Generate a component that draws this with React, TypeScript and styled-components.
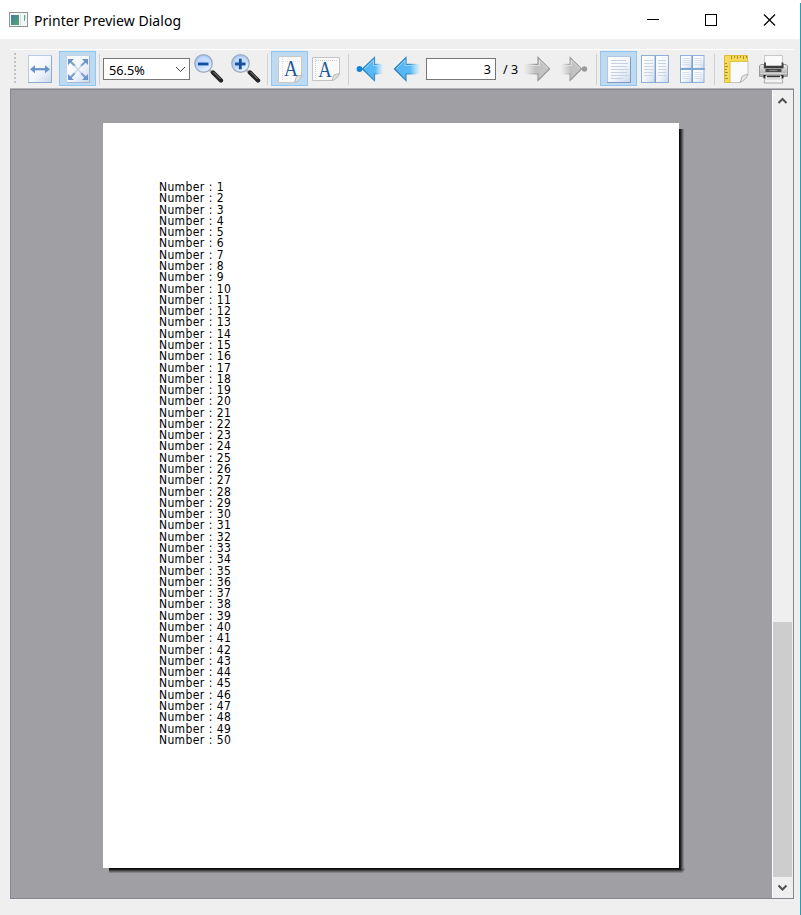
import React from "react";
import styled, { createGlobalStyle } from "styled-components";

const GlobalStyle = createGlobalStyle`
  html, body { margin: 0; padding: 0; background: #efefef; overflow: hidden; }
  * { box-sizing: border-box; }
`;

const Window = styled.div`
  width: 801px;
  height: 915px;
  display: flex;
  flex-direction: column;
  background: #efefef;
  font-family: "Noto Sans", "Open Sans", sans-serif;
  color: #000;
  position: relative;
`;

const WindowEdge = styled.div`
  position: absolute;
  right: 0;
  top: 3px;
  bottom: 0;
  width: 1px;
  background: #1ba1b8;
`;

const TitleBar = styled.header`
  height: 39px;
  flex: none;
  display: flex;
  align-items: center;
  background: #fff;
  padding: 0 0 0 9px;
`;

const Title = styled.h1`
  margin: 2px 0 0 6px;
  flex: 1;
  font-size: 14px;
  line-height: 20px;
  font-weight: 400;
  letter-spacing: 0.06px;
`;

const Caption = styled.div`
  display: flex;
  margin-right: 1px;
`;

const Body = styled.main`
  flex: 1;
  display: flex;
  flex-direction: column;
  padding: 10px 7px 16px 10px;
`;

const Toolbar = styled.div`
  height: 40px;
  flex: none;
  display: flex;
  align-items: flex-start;
  border-top: 1px solid #fff;
  border-bottom: 1px solid #b5b5b7;
  padding-top: 1px;
`;

const Grip = styled.div`
  width: 2px;
  height: 32px;
  margin: 2px 6px 0 4px;
  background: repeating-linear-gradient(to bottom, #c2c2c2 0 2px, transparent 2px 4px);
`;

const ToolButton = styled.button<{ $checked?: boolean }>`
  width: 37px;
  height: 35px;
  flex: none;
  padding: 0;
  border: 0;
  background: ${(p) => (p.$checked ? "#bedaf0" : "transparent")};
  box-shadow: ${(p) => (p.$checked ? "inset 0 0 0 1px #8fc6f2" : "none")};
`;

const IconSvg = styled.svg`
  display: block;
`;

const HiddenSvg = styled.svg`
  position: absolute;
`;

const Separator = styled.div`
  width: 7px;
  height: 31px;
  margin-top: 3px;
  flex: none;
  background: linear-gradient(#d0d0d0, #d0d0d0) 3px 0 / 1px 100% no-repeat;
`;

const ZoomCombo = styled.div`
  width: 87px;
  height: 22px;
  margin-top: 7px;
  padding: 1px 3px 0 5px;
  flex: none;
  display: flex;
  align-items: center;
  justify-content: space-between;
  border: 1px solid #777;
  background: #fff;
  font-size: 12.7px;
  line-height: 20px;
`;

const PageField = styled.div`
  width: 70px;
  height: 22px;
  margin-top: 7px;
  padding-right: 4px;
  flex: none;
  border: 1px solid #777;
  background: #fff;
  font-size: 12.5px;
  line-height: 22px;
  text-align: right;
`;

const PageCount = styled.span`
  width: 23px;
  flex: none;
  margin-top: 8px;
  padding-left: 7px;
  font-size: 12.5px;
  line-height: 22px;
  white-space: nowrap;
`;

const Preview = styled.section`
  flex: 1;
  display: flex;
  border: 1px solid #828790;
  background: #a09fa4;
`;

const Canvas = styled.div`
  flex: 1;
  padding: 33px 0 0 92px;
`;

const Sheet = styled.div`
  width: 582px;
  height: 750px;
  background:
    linear-gradient(#fff, #fff) 0 0 / 576px 745px no-repeat,
    linear-gradient(to right, #0c0c0c 0 1px, #202020 1px 2px, #424242 2px 3px, #666 3px 4px, #858587 4px 5px) 576px 6px / 5px 740px no-repeat,
    linear-gradient(to bottom, #080808 0 1px, #202020 1px 2px, #424242 2px 3px, #666 3px 4px, #858587 4px 5px) 6px 745px / 572px 5px no-repeat,
    radial-gradient(circle at 0 0, #181818 1px, #909093 5px, transparent 5.5px) 577px 745px / 5px 5px no-repeat;
`;

const Lines = styled.ol`
  list-style: none;
  margin: 0;
  padding: 59px 0 0 56px;
  font-family: "DejaVu Sans Condensed", "DejaVu Sans", sans-serif;
  font-stretch: condensed;
  font-size: 12px;
  line-height: 11.29px;
  letter-spacing: 0.35px;
  word-spacing: 0.4px;
`;

const Line = styled.li`
  height: 11.29px;
  white-space: nowrap;
`;

const ScrollBar = styled.div`
  width: 21px;
  display: flex;
  flex-direction: column;
  border-left: 1px solid #fff;
  background: #efefef;
`;

const ScrollArrow = styled.div`
  height: 21px;
  flex: none;
`;

const ScrollTrack = styled.div`
  flex: 1;
  display: flex;
  align-items: flex-end;
`;

const ScrollThumb = styled.div`
  width: 19px;
  height: 255px;
  background: #cdcdcd;
`;

const Icon = ({ children }: { children: React.ReactNode }) => (
  <IconSvg width="37" height="35" viewBox="0 0 37 35">{children}</IconSvg>
);

const Defs = () => (
  <HiddenSvg width="0" height="0">
    <defs>
      <linearGradient id="sheet" x1="0" y1="0" x2="1" y2="1">
        <stop offset="0" stopColor="#fff" />
        <stop offset=".55" stopColor="#f3f6fa" />
        <stop offset="1" stopColor="#c9d8eb" />
      </linearGradient>
      <linearGradient id="lens" x1="0" y1="0" x2="0.6" y2="1">
        <stop offset="0" stopColor="#a3c6fa" />
        <stop offset=".5" stopColor="#b3d2fd" />
        <stop offset="1" stopColor="#eaf4ff" />
      </linearGradient>
      <linearGradient id="blueFade" x1="0" y1="0" x2="1" y2="0">
        <stop offset="0" stopColor="#55b5f3" />
        <stop offset=".62" stopColor="#59baf7" />
        <stop offset="1" stopColor="#80cfff" stopOpacity="0.05" />
      </linearGradient>
      <linearGradient id="blueEdge" x1="0" y1="0" x2="1" y2="0">
        <stop offset="0" stopColor="#1f7fbe" />
        <stop offset=".6" stopColor="#3f8fc4" />
        <stop offset=".9" stopColor="#70bdf0" stopOpacity="0" />
      </linearGradient>
      <linearGradient id="grayFade" x1="0" y1="0" x2="1" y2="0">
        <stop offset="0" stopColor="#ccc" stopOpacity="0.05" />
        <stop offset=".45" stopColor="#c1c1c1" />
        <stop offset="1" stopColor="#c6c6c6" />
      </linearGradient>
      <linearGradient id="grayEdge" x1="0" y1="0" x2="1" y2="0">
        <stop offset=".1" stopColor="#aaa" stopOpacity="0" />
        <stop offset=".5" stopColor="#999" />
        <stop offset="1" stopColor="#999" />
      </linearGradient>
      <linearGradient id="appGreen" x1="0" y1="0" x2="1" y2="1">
        <stop offset="0" stopColor="#3d7fa0" />
        <stop offset="1" stopColor="#54a66c" />
      </linearGradient>
      <linearGradient id="metal" x1="0" y1="0" x2="0" y2="1">
        <stop offset="0" stopColor="#f0f0f0" />
        <stop offset="1" stopColor="#a0a0a0" />
      </linearGradient>
    </defs>
  </HiddenSvg>
);

const FitWidth = () => (
  <Icon>
    <rect x="6.5" y="4.5" width="23" height="27" fill="url(#sheet)" stroke="#b9cbe2" />
    <path d="M6 31.5h24M29.5 5v27" stroke="#8eabd2" />
    <path d="M11 18.2h14" stroke="#6893c8" strokeWidth="2.2" />
    <path d="M8 18.2l5-4v8zM28 18.2l-5-4v8z" fill="#6893c8" />
  </Icon>
);

const FitPage = () => (
  <Icon>
    <rect x="7.5" y="4.5" width="23" height="27" fill="url(#sheet)" stroke="#c5d5e9" />
    <path d="M8 31.5h23M30.5 5v27" stroke="#9fb8d8" />
    <path d="M11 10l5 5M27 10l-5 5M11 27l5-5M27 27l-5-5" stroke="#779fd0" strokeWidth="2" />
    <path d="M15.5 14.5l7 8M22.500 14.5l-7 8" stroke="#c8d7ea" strokeWidth="1.3" />
    <path d="M9 8h6l-6 6zM29 8h-6l6 6zM9 29h6l-6-6zM29 29h-6l6-6z" fill="#6994cb" />
  </Icon>
);

const Magnifier = ({ plus }: { plus?: boolean }) => (
  <Icon>
    <path d="M20 19.500l4 4" stroke="#aaa" strokeWidth="2.500" />
    <path d="M23 21.500l8 8" stroke="#242424" strokeWidth="4.400" strokeLinecap="round" />
    <path d="M23.500 21l7 7" stroke="#858585" strokeWidth="1" />
    <circle cx="13.500" cy="12.500" r="8.700" fill="url(#lens)" stroke="#9fadc3" strokeWidth="1.400" />
    <path d="M7.500 10.500a6.300 6.300 0 0 1 12 0z" fill="#dceaff" opacity=".5" />
    <path d="M8 13h10.500" stroke="#174f9f" strokeWidth="2.800" />
    {plus && <path d="M13.300 7.700v10.600" stroke="#174f9f" strokeWidth="2.800" />}
  </Icon>
);

const Serif = styled.text`
  font: 23.5px "Liberation Serif", serif;
  fill: #1e5797;
`;

const Portrait = () => (
  <Icon>
    <path d="M7.500 5.500h23v19l-7 7h-16z" fill="#fafafa" stroke="#c9c9c9" />
    <path d="M11.500 6v24" stroke="#d6d6d6" strokeDasharray="1 1" />
    <path d="M8 10.500h22" stroke="#e3e3e3" strokeDasharray="1 1" />
    <path d="M23.500 31.500l2-6 5.500-1.500c-1 3-4.500 7-7.500 7.500z" fill="#e5e5e5" stroke="#b7b7b7" />
    <Serif x="20" y="25" textAnchor="middle" textLength="14" lengthAdjust="spacingAndGlyphs">A</Serif>
  </Icon>
);

const Landscape = () => (
  <Icon>
    <path d="M4.500 6.500h27v16l-7 7h-20z" fill="#fafafa" stroke="#c3c3c3" />
    <path d="M7.500 8v20M8 9.500h21" stroke="#cecece" strokeDasharray="1 1" />
    <path d="M24 29.500l2-5.500 5.500-1.500c-1 3-4 6.500-7.500 7z" fill="#e0e0e0" stroke="#b7b7b7" />
    <Serif x="17" y="26" textAnchor="middle" textLength="13.5" lengthAdjust="spacingAndGlyphs">A</Serif>
  </Icon>
);

const FirstPage = () => (
  <Icon>
    <circle cx="7.5" cy="18" r="2.900" fill="#1583d3" />
    <path d="M10.500 18L22.500 6.500v6.800H31v9.700h-8.500v6.500z" fill="url(#blueFade)" stroke="url(#blueEdge)" strokeWidth="1.200" />
    <path d="M12.500 17.500L21.500 9v5.500h7" fill="none" stroke="#a5dcff" opacity=".8" />
  </Icon>
);

const PreviousPage = () => (
  <Icon>
    <path d="M5.500 18L17 6.500v6.800H31v9.700H17v6.500z" fill="url(#blueFade)" stroke="url(#blueEdge)" strokeWidth="1.200" />
    <path d="M7.500 17.500L16 9v5.500h12" fill="none" stroke="#a5dcff" opacity=".8" />
  </Icon>
);

const NextPage = () => (
  <Icon>
    <path d="M30.500 18L19 6.500v6.800H5v9.700h14v6.500z" fill="url(#grayFade)" stroke="url(#grayEdge)" strokeWidth="1.200" />
    <path d="M10 14.500h10.300V9l8.700 8.500" fill="none" stroke="#e2e2e2" />
  </Icon>
);

const LastPage = () => (
  <Icon>
    <circle cx="28.500" cy="18" r="2.700" fill="#999" />
    <path d="M25.500 18L14 6.500v6.800H5v9.700h9v6.500z" fill="url(#grayFade)" stroke="url(#grayEdge)" strokeWidth="1.200" />
    <path d="M9 14.500h6.300V9l8.700 8.500" fill="none" stroke="#e2e2e2" />
  </Icon>
);

const SinglePage = () => (
  <Icon>
    <rect x="7.500" y="5.500" width="23" height="26" fill="url(#sheet)" stroke="#b4c6df" />
    <path d="M7 31.500h24M30.500 6v26" stroke="#7f9bc5" />
    <path d="M11 9.500h15M11 12.500h17M11 15.500h16M11 18.500h17M11 21.500h16M11 24.500h17M11 27.500h12" stroke="#c6d2e3" />
  </Icon>
);

const FacingPages = () => (
  <Icon>
    <rect x="4.500" y="4.500" width="14" height="27" fill="url(#sheet)" stroke="#91b0d9" />
    <rect x="18.500" y="4.500" width="13" height="27" fill="url(#sheet)" stroke="#91b0d9" />
    <path d="M18.300 5v27" stroke="#7ea1cf" strokeWidth="1.500" />
    {[9.5, 12.5, 15.5, 18.5, 21.5, 24.5].map((y) => (
      <path key={y} d={`M7 ${y}h9M21 ${y}h8`} stroke="#cbd5e2" />
    ))}
  </Icon>
);

const Overview = () => (
  <Icon>
    {[[6.5, 4.5], [18.5, 4.5], [6.5, 18.5], [18.5, 18.5]].map(([x, y]) => (
      <g key={`${x}-${y}`}>
        <rect x={x} y={y} width="11.500" height="13" fill="url(#sheet)" stroke="#91b2dd" />
        <path d={`M${x + 2} ${y + 3}h7M${x + 2} ${y + 5}h8M${x + 2} ${y + 7}h7M${x + 2} ${y + 9}h7`} stroke="#d0dcea" strokeWidth=".8" />
      </g>
    ))}
    <path d="M6 18h25M18.300 5v27" stroke="#7ba2d4" strokeWidth="1.500" />
  </Icon>
);

const PageSetup = () => (
  <Icon>
    <path d="M11 10h19v13l-8 8.500H11z" fill="#fafafa" stroke="#c4c4c4" />
    <path d="M6.500 4.500h23v5.800H12v21.200H6.500z" fill="#f7da55" stroke="#dcbc3e" />
    <path d="M13.500 5v3M16.500 5v2M19.500 5v3M22.500 5v2M25.500 5v3M28.500 5v2M7 12.500h2M7 15.500h3M7 18.500h2M7 21.500h3M7 24.500h2M7 27.500h3" stroke="#a88e35" />
    <path d="M21.500 31.500c2-1 1.500-5 3-6.500 1-1 3.500-1 5.500-2-1 4-5 7.500-8.500 8.500z" fill="#e7e7e7" stroke="#b0b0b0" />
  </Icon>
);

const Printer = () => (
  <Icon>
    <path d="M9.500 4.500h18v10h-18z" fill="#fafafa" stroke="#c8c8c8" />
    <path d="M4.500 16c0-2 1-2.500 2.500-2.500h2v4h19v-4h2c1.500 0 2.500 .5 2.500 2.500v9.500h-28z" fill="url(#metal)" stroke="#999" />
    <path d="M10 11.500v4.500h17.500v-4.500" fill="none" stroke="#3c3c3c" strokeWidth="1.800" />
    <path d="M10.500 19.500h16" stroke="#4a4a4a" strokeWidth="3" />
    <path d="M14 19.500h8" stroke="#858585" />
    <path d="M5 22.500h27" stroke="#d5d5d5" />
    <path d="M8.500 24h3l-1 3.500h-2zM28.500 24h-3l1 3.500h2z" fill="#222" />
    <path d="M11 24.500h15l2 7.500H9z" fill="#f4f4f4" stroke="#a8a8a8" />
    <path d="M12 25.500h13" stroke="#333" strokeWidth="1.500" />
    <path d="M11.500 28h14" stroke="#c9c9c9" />
  </Icon>
);

const numbers = Array.from({ length: 50 }, (_, i) => i + 1);

export default function App() {
  return (
    <Window>
      <GlobalStyle />
      <Defs />
      <TitleBar>
        <svg width="19" height="16" viewBox="0 0 19 16">
          <rect x=".5" y=".5" width="18" height="14" fill="#f5f7f7" stroke="#8b9695" />
          <rect x="2" y="3" width="8" height="10" fill="url(#appGreen)" />
          <path d="M11.500 3v10" stroke="#d5d9dc" />
          <path d="M15.500 3v6" stroke="#57b384" />
          <path d="M16.500 3v4" stroke="#cbd8ec" />
        </svg>
        <Title>Printer Preview Dialog</Title>
        <Caption>
          <svg width="165" height="39" viewBox="0 0 165 39" fill="none" stroke="#000">
            <path d="M12 19.500h12" />
            <rect x="70.500" y="14.500" width="11" height="11" />
            <path d="M129 14.500l11 11M140 14.500l-11 11" strokeWidth="1.2" />
          </svg>
        </Caption>
      </TitleBar>
      <Body>
        <Toolbar>
          <Grip />
          <ToolButton aria-label="Fit width"><FitWidth /></ToolButton>
          <ToolButton $checked aria-label="Fit page"><FitPage /></ToolButton>
          <Separator />
          <ZoomCombo>
            56.5%
            <svg width="11" height="7" viewBox="0 0 11 7" fill="none" stroke="#444">
              <path d="M1 1l4.500 4.500L10 1" />
            </svg>
          </ZoomCombo>
          <ToolButton aria-label="Zoom out"><Magnifier /></ToolButton>
          <ToolButton aria-label="Zoom in"><Magnifier plus /></ToolButton>
          <Separator />
          <ToolButton $checked aria-label="Portrait"><Portrait /></ToolButton>
          <ToolButton aria-label="Landscape"><Landscape /></ToolButton>
          <Separator />
          <ToolButton aria-label="First page"><FirstPage /></ToolButton>
          <ToolButton aria-label="Previous page"><PreviousPage /></ToolButton>
          <PageField>3</PageField>
          <PageCount>/ 3</PageCount>
          <ToolButton aria-label="Next page"><NextPage /></ToolButton>
          <ToolButton aria-label="Last page"><LastPage /></ToolButton>
          <Separator />
          <ToolButton $checked aria-label="Single page"><SinglePage /></ToolButton>
          <ToolButton aria-label="Facing pages"><FacingPages /></ToolButton>
          <ToolButton aria-label="Overview"><Overview /></ToolButton>
          <Separator />
          <ToolButton aria-label="Page setup"><PageSetup /></ToolButton>
          <ToolButton aria-label="Print"><Printer /></ToolButton>
        </Toolbar>
        <Preview>
          <Canvas>
            <Sheet>
              <Lines>
                {numbers.map((n) => (
                  <Line key={n}>Number : {n}</Line>
                ))}
              </Lines>
            </Sheet>
          </Canvas>
          <ScrollBar>
            <ScrollArrow>
              <IconSvg width="20" height="21" viewBox="0 0 20 21" fill="none" stroke="#505050" strokeWidth="2">
                <path d="M5.500 13L9.500 9l4 4" />
              </IconSvg>
            </ScrollArrow>
            <ScrollTrack><ScrollThumb /></ScrollTrack>
            <ScrollArrow>
              <IconSvg width="20" height="21" viewBox="0 0 20 21" fill="none" stroke="#505050" strokeWidth="2">
                <path d="M5.500 8.500l4 4 4-4" />
              </IconSvg>
            </ScrollArrow>
          </ScrollBar>
        </Preview>
      </Body>
      <WindowEdge />
    </Window>
  );
}
